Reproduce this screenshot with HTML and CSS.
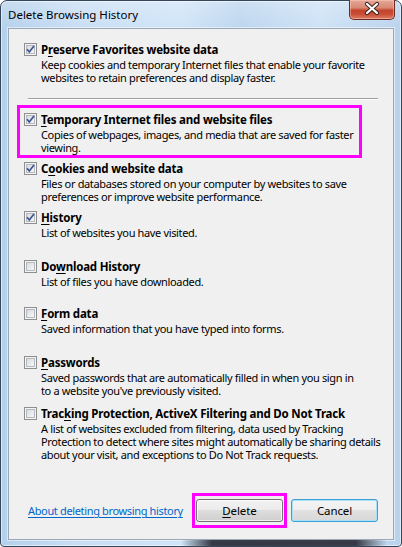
FILE: index.html
```html
<!DOCTYPE html>
<html>
<head>
<meta charset="utf-8">
<link rel="stylesheet" href="styles.css">
</head>
<body>
<div class="window">
  <div class="titlebar">
    <span class="title">Delete Browsing History</span>
    <div class="close">
      <svg width="46" height="19" viewBox="0 0 46 19">
        <path d="M18 5 L28 14 M28 5 L18 14" stroke="#3b2320" stroke-width="4.2" stroke-linecap="round" fill="none"/>
        <path d="M18 5 L28 14 M28 5 L18 14" stroke="#ffffff" stroke-width="2.2" stroke-linecap="round" fill="none"/>
      </svg>
    </div>
  </div>
  <div class="client">
    <div class="item">
      <span class="cb"><svg width="11" height="11" viewBox="0 0 11 11"><path d="M2 5.2 L4.3 8 L9 2" class="tick"/></svg></span>
      <div class="label">P<u>r</u>eserve Favorites website data</div>
      <div class="desc">Keep cookies and temporary Internet files that enable your favorite<br>websites to retain preferences and display faster.</div>
    </div>
    <div class="sep"></div>
    <div class="highlight">
      <div class="item">
        <span class="cb"><svg width="11" height="11" viewBox="0 0 11 11"><path d="M2 5.2 L4.3 8 L9 2" class="tick"/></svg></span>
        <div class="label"><u>T</u>emporary Internet files and website files</div>
        <div class="desc">Copies of webpages, images, and media that are saved for faster<br>viewing.</div>
      </div>
    </div>
    <div class="item row">
      <span class="cb"><svg width="11" height="11" viewBox="0 0 11 11"><path d="M2 5.2 L4.3 8 L9 2" class="tick"/></svg></span>
      <div class="label">C<u>o</u>okies and website data</div>
      <div class="desc">Files or databases stored on your computer by websites to save<br>preferences or improve website performance.</div>
    </div>
    <div class="item row">
      <span class="cb"><svg width="11" height="11" viewBox="0 0 11 11"><path d="M2 5.2 L4.3 8 L9 2" class="tick"/></svg></span>
      <div class="label"><u>H</u>istory</div>
      <div class="desc">List of websites you have visited.</div>
    </div>
    <div class="item row short">
      <span class="cb"></span>
      <div class="label">Do<u>w</u>nload History</div>
      <div class="desc">List of files you have downloaded.</div>
    </div>
    <div class="item row">
      <span class="cb"></span>
      <div class="label"><u>F</u>orm data</div>
      <div class="desc">Saved information that you have typed into forms.</div>
    </div>
    <div class="item row tall">
      <span class="cb"></span>
      <div class="label"><u>P</u>asswords</div>
      <div class="desc">Saved passwords that are automatically filled in when you sign in<br>to a website you've previously visited.</div>
    </div>
    <div class="item">
      <span class="cb"></span>
      <div class="label">Trac<u>k</u>ing Protection, ActiveX Filtering and Do Not Track</div>
      <div class="desc">A list of websites excluded from filtering, data used by Tracking<br>Protection to detect where sites might automatically be sharing details<br>about your visit, and exceptions to Do Not Track requests.</div>
    </div>
    <div class="footer">
      <a class="link" href="#">About deleting browsing history</a>
      <div class="btnbox"><button class="btn"><u>D</u>elete</button></div>
      <button class="btn default">Cancel</button>
    </div>
  </div>
</div>
</body>
</html>
```

FILE: styles.css
```css
html, body {
  margin: 0;
  padding: 0;
  background: #ffffff;
}

body {
  width: 402px;
  height: 547px;
  overflow: hidden;
  font-family: "Noto Sans", "Open Sans", sans-serif;
  font-size: 11px;
  color: #000;
}

.window {
  position: relative;
  width: 402px;
  height: 547px;
  box-sizing: border-box;
  border: 1px solid #34465c;
  border-radius: 7px 7px 4px 4px;
  padding: 0 7px 6px;
  display: flex;
  flex-direction: column;
  background:
    linear-gradient(to bottom, rgba(255,255,255,0.25), rgba(255,255,255,0) 30px),
    linear-gradient(to right, #b4d0ec 0%, #c9def4 20%, #cfe4f8 45%, #bcd5ee 60%, #cde2f6 80%, #b9d2ec 100%);
  box-shadow: inset 0 0 0 1px rgba(255,255,255,0.55);
}

.window::after {
  content: "";
  position: absolute;
  left: 180px;
  right: 14px;
  bottom: 0;
  height: 6px;
  background: linear-gradient(to right, rgba(40,40,50,0), rgba(30,30,40,0.85) 15%, rgba(30,30,40,0.85) 85%, rgba(40,40,50,0));
}

.titlebar {
  height: 27px;
  display: flex;
  align-items: flex-start;
}

.title {
  padding-top: 6px;
  font-size: 11.5px;
  line-height: 16px;
  color: #000;
}

.close {
  position: absolute;
  top: -1px;
  right: 6px;
  width: 46px;
  height: 20px;
  box-sizing: border-box;
  border: 1px solid #6b2a22;
  border-top: none;
  border-radius: 0 0 5px 5px;
  background: linear-gradient(to bottom, #e6a796 0%, #d88a76 40%, #c3442c 55%, #c94d35 75%, #dd7f65 100%);
  box-shadow: inset 0 0 0 1px rgba(255,210,200,0.45);
}

.close svg {
  display: block;
  margin: -1px 0 0 -1px;
}

.client {
  flex: 1;
  display: flex;
  flex-direction: column;
  background: #f0f0f0;
  border: 1px solid #9aa8b8;
  padding: 12px 15px 11px 15px;
  box-shadow: 0 0 0 1px rgba(255,255,255,0.5);
}

.item {
  display: grid;
  grid-template-columns: 13px 1fr;
  column-gap: 4px;
  align-content: start;
}

.item.row {
  height: 49px;
}

.item.short {
  height: 47px;
}

.item.tall {
  height: 51px;
}

.cb {
  grid-row: 1;
  grid-column: 1;
  margin-top: 2px;
  width: 13px;
  height: 13px;
  box-sizing: border-box;
  border: 1px solid #8e8f8f;
  background: linear-gradient(135deg, #cdd1d7 0%, #eceef0 60%, #f8f8f8 100%);
  box-shadow: inset 0 0 0 1px #f4f4f4, inset 0 0 0 2px #b6bac0;
}

.cb svg {
  display: block;
}

.tick {
  fill: none;
  stroke: #3c5394;
  stroke-width: 1.7;
}

.label {
  grid-row: 1;
  grid-column: 2;
  font-weight: bold;
  font-size: 11.5px;
  letter-spacing: -0.2px;
  line-height: 17px;
  white-space: nowrap;
}

.desc {
  grid-row: 2;
  grid-column: 2;
  font-size: 11px;
  letter-spacing: -0.35px;
  line-height: 13px;
  white-space: nowrap;
  color: #000;
}

u {
  text-decoration: underline;
  text-underline-offset: 2px;
}

.sep {
  margin: 14px 0 0 4px;
  width: 350px;
  border-top: 1px solid #a0a0a0;
  border-bottom: 1px solid #ffffff;
}

.highlight {
  margin: 5px 0 2px -7px;
  width: 345px;
  box-sizing: border-box;
  border: 3px solid #ff00ff;
  padding: 3px 0 1px 4px;
}

.footer {
  margin-top: auto;
  display: flex;
  align-items: center;
  padding-left: 4px;
}

.link {
  color: #0066cc;
  font-size: 11px;
  letter-spacing: -0.35px;
  text-decoration: underline;
  text-underline-offset: 2px;
  white-space: nowrap;
}

.btnbox {
  margin-left: auto;
  border: 3px solid #ff00ff;
  padding: 3px 1px;
  display: flex;
}

.btn {
  width: 87px;
  height: 23px;
  margin: 0;
  padding: 0;
  box-sizing: border-box;
  font-family: "Noto Sans", "Open Sans", sans-serif;
  font-size: 11.5px;
  letter-spacing: -0.1px;
  color: #000;
  border: 1px solid #707070;
  border-radius: 3px;
  background: linear-gradient(to bottom, #f2f2f2 0%, #ebebeb 49%, #dddddd 50%, #cfcfcf 100%);
  box-shadow: inset 0 0 0 1px rgba(255,255,255,0.7);
}

.btn.default {
  margin-left: 4px;
  border-color: #3c9fd6;
  box-shadow: inset 0 0 0 1px #a8e1f8;
  background: linear-gradient(to bottom, #f4f4f4 0%, #eeeeee 49%, #e1e1e1 50%, #d8d8d8 100%);
}
```
